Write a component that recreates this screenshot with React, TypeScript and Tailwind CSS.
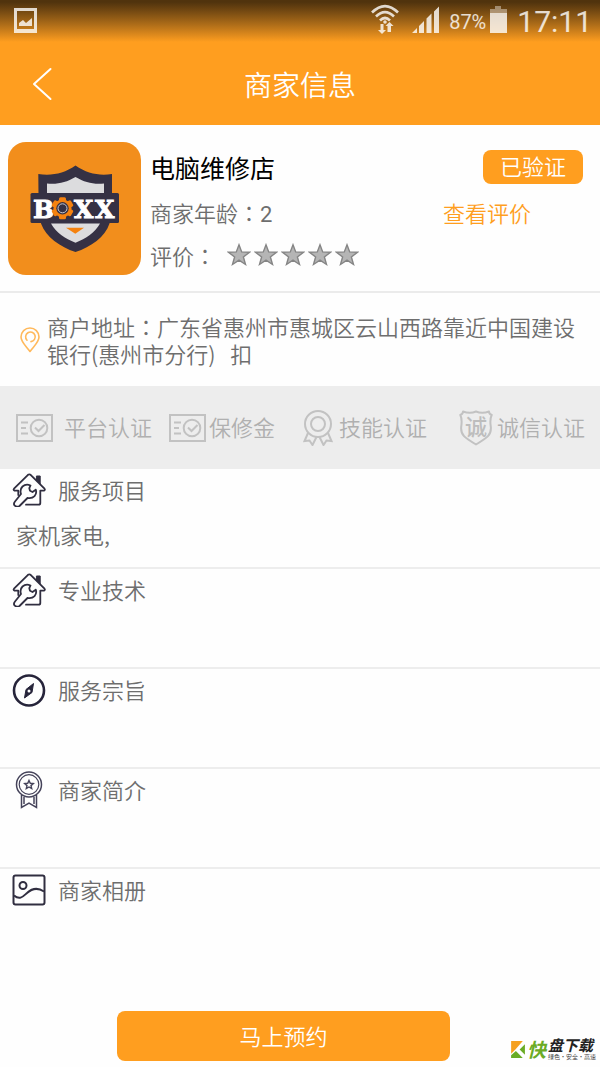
import type { ReactNode } from "react";

function Colon() {
  return <span className="font-['Noto_Sans_CJK_TC',sans-serif]">：</span>;
}

function StatusBar() {
  return (
    <div className="flex h-[42px] items-start justify-between bg-linear-to-b from-[#50330d] from-5% to-[#ff9e1f] pl-3.5 pr-2 text-white/80">
      <svg className="mt-2 h-[25px] w-[23px]" viewBox="0 0 23 25" fill="currentColor" aria-hidden="true">
        <path fillRule="evenodd" d="M0 0h23v25H0zM3 3v18h17V3z" />
        <path d="M5 18v-3l4-3 3 3 6-5v8z" />
      </svg>
      <div className="flex items-start">
        <svg className="mt-1 h-[30px] w-7" viewBox="0 0 28 30" fill="none" stroke="currentColor" aria-hidden="true">
          <path strokeWidth="2.6" d="M1 8.500Q14-4.500 27 8.500M5 12.500Q14 3.500 23 12.500M9 16.500Q14 11.500 19 16.500" />
          <circle cx="14" cy="18" r="1.800" fill="currentColor" stroke="none" />
          <path fill="currentColor" stroke="none" d="M9.500 20h3v6h2.500L11 30l-4-4h2.500zM16.500 28h3.500v-6h2.500L18.500 18l-4 4h2z" />
        </svg>
        <svg className="ml-[13px] mt-1.5 h-[27px] w-7" viewBox="0 0 28 27" fill="currentColor" aria-hidden="true">
          <path d="M0 27l5-5v5zM7 20l5-5v12H7zM14.500 12.500l5-5V27h-5zM22 5.500l5-5V27h-5z" />
        </svg>
        <span className="ml-[9px] mt-2.5 font-[Roboto,sans-serif] text-xl font-normal leading-6">87%</span>
        <svg className="ml-1 mt-1.5 h-[27px] w-[17px]" viewBox="0 0 17 27" fill="currentColor" aria-hidden="true">
          <path opacity=".5" d="M5 0h6v3h6v4H0V3h5z" />
          <path d="M0 7h17v20H0z" />
        </svg>
        <span className="ml-2.5 mt-1 font-[Roboto,sans-serif] text-[30px] font-normal leading-9">17:11</span>
      </div>
    </div>
  );
}

function ShopLogo() {
  return (
    <svg className="size-[133px] shrink-0" viewBox="8 142 133 133" role="img" aria-label="BOXX">
      <rect x="8" y="142" width="133" height="133" rx="18" fill="#f28e1c" />
      <path fill="#353144" d="M75.500 165.500C64 173.500 52 176 38.300 174l.200 22q-1 15 2.500 27.500C46 237 60 247 75.500 252 91 247 105 237 109.500 223.500q3-12.500 2.500-27.500V174c-13 2-25-.500-36.500-8.500z" />
      <path fill="#dcdcde" d="M75.500 177C66 182.500 58 184.500 47 183.500V194h57V183.500c-11 1-19-1-28.500-6.500zM51 223.500c5 9 14 15 24.500 19.200C86 238.500 95 232.500 100 223.500z" />
      <rect x="30.500" y="193" width="88.500" height="30" rx="1.500" fill="#353144" />
      <path fill="#f5820f" d="M66 227.800h18l-8.700 6z" />
      <g fill="#fff" stroke="#fff" strokeWidth="0.900" className="font-['DejaVu_Serif',serif] text-[25px] font-bold">
        <text x="33" y="217.500">B</text>
        <text x="74" y="217.500">X</text>
        <text x="95" y="217.500">X</text>
      </g>
      <g fill="#f5820f">
        <circle cx="62.500" cy="208.300" r="9" />
        <rect x="59" y="197.300" width="7" height="22" rx="1.500" />
        <rect x="59" y="197.300" width="7" height="22" rx="1.500" transform="rotate(60 62.500 208.300)" />
        <rect x="59" y="197.300" width="7" height="22" rx="1.500" transform="rotate(120 62.500 208.300)" />
      </g>
      <circle cx="62.500" cy="208.300" r="6.200" fill="#353144" />
      <circle cx="62.500" cy="208.300" r="4.500" fill="none" stroke="#c9c9d0" strokeWidth="1" />
    </svg>
  );
}

function Star() {
  return (
    <svg className="size-6" viewBox="0 0 24 24" aria-hidden="true">
      <path fill="#b5b5b5" stroke="#858585" strokeWidth="1.400" d="M12 1.800l2.700 7.100 7.800.300-6.100 4.800 2.100 7.500-6.500-4.300-6.500 4.300 2.100-7.500-6.100-4.800 7.800-.300z" />
    </svg>
  );
}

function PinIcon() {
  return (
    <svg className="h-[26px] w-5 shrink-0" viewBox="0 0 20 26" fill="none" stroke="#ffb95c" strokeWidth="1.600" strokeLinecap="round" aria-hidden="true">
      <path strokeLinejoin="round" d="M10 24.500C6 19 1 15 1 10a9 9 0 0 1 18 0c0 5-5 9-9 14.500z" />
      <path d="M7 13.200a4.800 4.800 0 1 1 4 1.400" />
    </svg>
  );
}

function CardIcon() {
  return (
    <svg className="h-7 w-[37px] shrink-0" viewBox="0 0 37 28" fill="none" stroke="#c2c2c2" strokeWidth="2" aria-hidden="true">
      <rect x="1" y="1" width="35" height="26" />
      <path d="M5 8.500h7M5 14h5M5 19.500h7M19 13.500l3.500 3.500 6-6" />
      <circle cx="23" cy="14" r="8.300" />
    </svg>
  );
}

function MedalIcon() {
  return (
    <svg className="h-9 w-[30px] shrink-0" viewBox="0 0 30 36" fill="none" stroke="#c2c2c2" strokeWidth="2" aria-hidden="true">
      <circle cx="15" cy="14" r="13" />
      <circle cx="15" cy="14" r="7" />
      <path d="M5 23L1.500 31l5-.500L9.500 35l4-8M25 23l3.500 8-5-.500-3 4.500-4-8" />
    </svg>
  );
}

function ShieldIcon() {
  return (
    <svg className="h-9 w-[34px] shrink-0" viewBox="0 0 34 36" fill="none" stroke="#c2c2c2" strokeWidth="2" aria-hidden="true">
      <path strokeLinejoin="round" d="M17 1.500Q11 4 4 1.500 4 4 1.300 5q2 4 1 11C1 25 6 28 17 34.500 28 28 33 25 31.700 16q-1-7 1-11Q30 4 30 1.500 23 4 17 1.500z" />
      <text x="6" y="24.500" fill="#bdbdbd" stroke="none" className="text-[22px] font-medium">诚</text>
    </svg>
  );
}

function HouseIcon() {
  return (
    <svg className="h-[34px] w-[34px]" viewBox="0 0 34 34" fill="none" stroke="#302e40" strokeWidth="1.800" strokeLinejoin="round" strokeLinecap="round" aria-hidden="true">
      <path d="M6.300 22v-4.300H2.500q-1.500-.700-.500-2L16 1.800q1.300-1 2.600 0L32.500 15.700q1 1.300-.500 2H28.300V30q0 1.700-1.700 1.700H14" />
      <path fill="#302e40" strokeWidth="1" d="M24.800 3h3.400v8l-3.400-3.200z" />
      <path d="M18.500 12.500q-4.500-2-8 1-3 3-1.500 7.500l-6 7.500q-2 2.500-.200 4.200t4.700.300l8-8q4.500.800 7-1.800 2.500-3 1.300-6.500l-3.300 2.300-2.500-1.200-.700-2.600z" />
    </svg>
  );
}

function CompassIcon() {
  return (
    <svg className="h-[34px] w-[34px]" viewBox="0 0 34 34" fill="none" stroke="#26243a" aria-hidden="true">
      <circle cx="17" cy="17.500" r="15" strokeWidth="2.600" />
      <path fill="#26243a" d="M21.500 10.500L20 19.500l-7.500 5.500L14 16.500z" />
      <circle cx="17" cy="18" r="1.500" fill="#fff" stroke="none" />
    </svg>
  );
}

function RibbonIcon() {
  return (
    <svg className="h-[38px] w-[34px]" viewBox="0 0 34 38" fill="none" stroke="#45435a" strokeWidth="1.500" aria-hidden="true">
      <circle cx="17" cy="13.500" r="12.500" />
      <circle cx="17" cy="13.500" r="9.800" strokeWidth="1.200" />
      <path strokeWidth="1.400" d="M17 9.500l1.300 2.800 3 .300-2.300 2 .700 3-2.700-1.600-2.700 1.600.700-3-2.300-2 3-.300z" />
      <path d="M9.500 24v12.500l7.500-4.500 7.500 4.500V24M12 26v7M22 26v7" />
    </svg>
  );
}

function AlbumIcon() {
  return (
    <svg className="h-[34px] w-[34px]" viewBox="0 0 34 34" fill="none" stroke="#302e40" strokeWidth="2" aria-hidden="true">
      <rect x="1.500" y="2.500" width="31" height="29" rx="2" />
      <circle cx="11" cy="12.500" r="3.500" />
      <path d="M2 22.500c6 5 9 1 13-2.500 6-5.500 11-5.500 17-1.500" />
    </svg>
  );
}

const certificates: { label: string; icon: ReactNode; gap: string }[] = [
  { label: "平台认证", icon: <CardIcon />, gap: "gap-[11px]" },
  { label: "保修金", icon: <CardIcon />, gap: "gap-[3px]" },
  { label: "技能认证", icon: <MedalIcon />, gap: "gap-[6px]" },
  { label: "诚信认证", icon: <ShieldIcon />, gap: "gap-1" },
];

const sections: { title: string; icon: ReactNode; body?: string }[] = [
  { title: "服务项目", icon: <HouseIcon />, body: "家机家电," },
  { title: "专业技术", icon: <HouseIcon /> },
  { title: "服务宗旨", icon: <CompassIcon /> },
  { title: "商家简介", icon: <RibbonIcon /> },
  { title: "商家相册", icon: <AlbumIcon /> },
];

function Brand() {
  return (
    <div className="flex w-[83px] shrink-0 items-center gap-0.5 self-end whitespace-nowrap">
      <svg className="h-[17px] w-[14px] shrink-0" viewBox="0 0 13 16" aria-hidden="true">
        <path fill="#f5a01e" d="M0 0h11L4 8l-4 4z" />
        <path fill="#6aab25" d="M0 16v-2.500L4.500 9.500 11 16zM8 8l5-5v10z" />
      </svg>
      <span className="text-[19px] font-bold italic leading-6 text-[#6aab25]">快</span>
      <span className="flex flex-col">
        <span className="text-[15px] font-bold italic leading-4 text-[#222]">盘下载</span>
        <span className="text-[6px] font-normal leading-2 text-[#444]">绿色·安全·高速</span>
      </span>
    </div>
  );
}

export default function App() {
  return (
    <div className="flex min-h-screen flex-col bg-[#fefefe] font-['Noto_Sans_CJK_SC',sans-serif] text-[22px] font-[350] leading-[30px] text-[#6e6e6e]">
      <header className="bg-[#ff9e1f] text-white">
        <StatusBar />
        <div className="grid h-[83px] grid-cols-[1fr_auto_1fr] items-center">
          <button type="button" aria-label="返回" className="ml-8 w-5 justify-self-start">
            <svg className="h-[34px] w-5" viewBox="0 0 20 34" fill="none" stroke="currentColor" strokeWidth="2" strokeLinecap="round" strokeLinejoin="round" aria-hidden="true">
              <path d="M18.500 2L2 17l16.500 15" />
            </svg>
          </button>
          <h1 className="text-[28px] font-[350] leading-10">商家信息</h1>
        </div>
      </header>

      <main className="flex-1">
        <section className="flex gap-[9px] border-b-2 border-[#ebebeb] pb-4 pl-2 pr-[17px] pt-[17px]">
          <ShopLogo />
          <div className="min-w-0 flex-1">
            <div className="flex h-[50px] items-center justify-between">
              <h2 className="text-[25px] font-normal leading-9 text-black">电脑维修店</h2>
              <span className="rounded-lg bg-[#ff9e1f] px-[17px] pb-1 text-white">已验证</span>
            </div>
            <div className="flex h-[43px] items-center justify-between pr-[52px]">
              <p>商家年龄<Colon /><span className="font-[Roboto,sans-serif] font-normal">2</span></p>
              <a href="#reviews" className="pb-1 text-[#ff9e1f]">查看评价</a>
            </div>
            <div className="flex h-10 items-center">
              <span>评价<Colon /></span>
              <div className="ml-[11px] flex gap-[3px]" role="img" aria-label="评价">
                <Star /><Star /><Star /><Star /><Star />
              </div>
            </div>
          </div>
        </section>

        <section className="flex items-center gap-[7px] pb-[19px] pl-5 pr-4 pt-5">
          <PinIcon />
          <p className="whitespace-pre-wrap leading-[27px]">
            商户地址<Colon />{"广东省惠州市惠城区云山西路靠近中国建设银行(惠州市分行)   扣"}
          </p>
        </section>

        <ul className="grid h-[83px] grid-cols-[153fr_134fr_156fr_141fr] items-center bg-[#ededed] pl-4 text-[#b0b0b0]">
          {certificates.map(({ label, icon, gap }) => (
            <li key={label} className={"flex items-center whitespace-nowrap " + gap}>
              {icon}
              <span className="pb-1">{label}</span>
            </li>
          ))}
        </ul>

        {sections.map(({ title, icon, body }) => (
          <section key={title} className="h-[100px] border-b-2 border-[#ededed] last:border-b-0">
            <div className="flex h-[42px] items-center gap-3 pl-3">
              {icon}
              <h3 className="pb-0.5">{title}</h3>
            </div>
            {body && <p className="mt-2 pl-4">{body}</p>}
          </section>
        ))}
      </main>

      <footer className="flex items-center gap-[61px] pb-1.5 pl-[117px] pr-1.5">
        <button type="button" className="h-[50px] flex-1 rounded-lg bg-[#ff9e1f] pb-0.5 text-white">马上预约</button>
        <Brand />
      </footer>
    </div>
  );
}
